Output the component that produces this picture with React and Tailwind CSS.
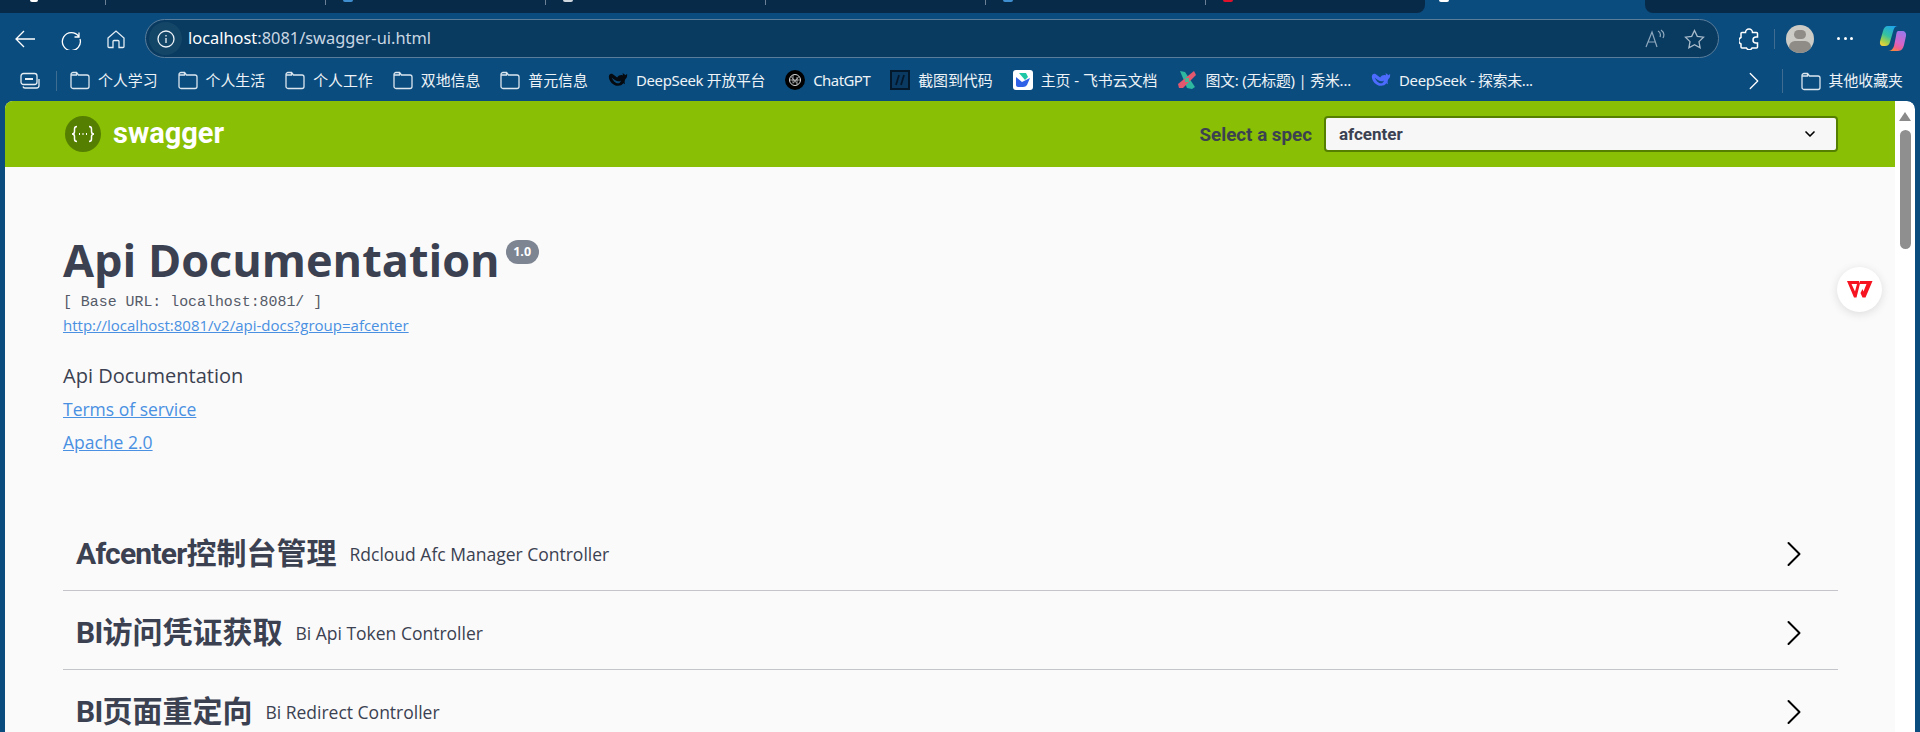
import React from "react";
import { ChevronRight, ChevronDown } from "lucide-react";

const ui = { fontFamily: '"Noto Sans", "Noto Sans CJK SC", sans-serif' };

const FolderIcon = () => (
  <svg width="20" height="20" viewBox="0 0 20 20" fill="none" stroke="#dbe6ef" strokeWidth="1.3" className="shrink-0">
    <path d="M1 4.500a2 2 0 0 1 2-2h3.500l2 2.500H17a2 2 0 0 1 2 2v9.500a2 2 0 0 1-2 2H3a2 2 0 0 1-2-2z" />
    <path d="M6.500 2.500v2.500H1" />
  </svg>
);

const WhaleIcon = ({ color }) => (
  <svg width="20" height="18" viewBox="0 0 24 20" fill={color} className="shrink-0">
    <path d="M23 3c-1 0-1.500.6-2.200 1.400C20 3 18.500 2 17.500 1.500l.5 3C16 3.500 13 4 11 7L5 2.500C3 2 1 3 1 6c0 5 5 11 11 11 3 0 5-1 6.500-3 .5.600 1.500 1 2 1-.5-1-.7-2-.5-3.500.3-2 1-3 2-4 .7-.8 1-2 1-4.500zM12 14c-3 0-6-3-7.500-7 2 2 4.500 4 7.500 4.500 1.500.2 2.500-.2 3.500-1-.5 2-1.500 3.500-3.500 3.500z" />
  </svg>
);

const ChatGptIcon = () => (
  <span className="w-5 h-5 rounded-full bg-black flex items-center justify-center shrink-0">
    <svg width="14" height="14" viewBox="0 0 14 14" fill="none" stroke="#d8d8d8" strokeWidth="1">
      <circle cx="7" cy="7" r="5.500" />
      <path d="M3 3.500l6 7M11 3.500l-6 7M1.500 7h11M5 2v8M9 4v8" strokeWidth=".7" />
    </svg>
  </span>
);

const SliceIcon = () => (
  <span className="w-5 h-5 bg-[#0a3a62] border-2 border-[#04182c] flex items-center justify-center shrink-0">
    <svg width="14" height="14" viewBox="0 0 14 14" fill="none" stroke="#04182c" strokeWidth="1.800">
      <path d="M6 2L3 12M11 2L8 12" />
    </svg>
  </span>
);

const FeishuIcon = () => (
  <span className="w-5 h-5 rounded-[3px] bg-white flex items-center justify-center shrink-0">
    <svg width="16" height="16" viewBox="0 0 16 16">
      <path d="M4 1h7l2 4-3 3z" fill="#1ec7a5" />
      <path d="M1 5l6 5 8-4-3 7c-1 1-2 2-4 2H3c-1 0-2-1-2-2z" fill="#2f62e6" />
    </svg>
  </span>
);

const XIcon = () => (
  <svg width="20" height="20" viewBox="0 0 20 20" className="shrink-0">
    <path d="M3 1l5 1 10 15-3 2-5-1z" fill="#2eb8a0" />
    <path d="M17 1l2 4L6 18l-4 0-1-4z" fill="#e2586e" />
    <path d="M8 8l4 0 0 4-4 0z" fill="#4db58f" />
  </svg>
);

const bookmarks = [
  { label: "个人学习", icon: <FolderIcon /> },
  { label: "个人生活", icon: <FolderIcon /> },
  { label: "个人工作", icon: <FolderIcon /> },
  { label: "双地信息", icon: <FolderIcon /> },
  { label: "普元信息", icon: <FolderIcon /> },
  { label: "DeepSeek 开放平台", icon: <WhaleIcon color="#050a10" />, track: "tracking-[-0.3px]" },
  { label: "ChatGPT", icon: <ChatGptIcon />, track: "tracking-[-0.5px]" },
  { label: "截图到代码", icon: <SliceIcon /> },
  { label: "主页 - 飞书云文档", icon: <FeishuIcon /> },
  { label: "图文: (无标题) | 秀米...", icon: <XIcon />, track: "tracking-[-0.2px]" },
  { label: "DeepSeek - 探索未...", icon: <WhaleIcon color="#4d6bfe" />, track: "tracking-[-0.3px]" },
];

const sections = [
  { latin: "Afcenter", cjk: "控制台管理", desc: "Rdcloud Afc Manager Controller" },
  { latin: "BI", cjk: "访问凭证获取", desc: "Bi Api Token Controller" },
  { latin: "BI", cjk: "页面重定向", desc: "Bi Redirect Controller" },
];

// favicons of the background tabs, only their bottom edge is still on screen
const tabs = [
  { color: "" },
  { color: "bg-[#3f8fd0]" },
  { color: "bg-[#cfd8df]" },
  { color: "" },
  { color: "bg-[#3f8fd0]" },
  { color: "bg-[#e0112b]" },
];

const TabStrip = () => (
  <div className="flex h-[13px] shrink-0">
    <div className="flex w-[1425px] bg-[#082a49] rounded-br-lg overflow-hidden">
      <div className="w-[105px] pl-[30px]">
        <span className="block w-2 h-[2px] bg-white rounded-b-full" />
      </div>
      {tabs.map((t, i) => (
        <div key={i} className="relative w-[220px] pl-[18px]">
          <span className="absolute left-0 top-0 w-px h-[5px] bg-[#6d8196]" />
          {t.color && <span className={`block w-[10px] h-[2px] rounded-b-full ${t.color}`} />}
        </div>
      ))}
    </div>
    <div className="w-[220px] pl-[14px]">
      <span className="block w-[10px] h-[2px] rounded-b-full bg-white" />
    </div>
    <div className="flex-1 bg-[#082a49] rounded-bl-lg" />
  </div>
);

const Toolbar = () => (
  <div className="flex items-center h-[47px] pb-[2px] pt-[6px]">
    <svg width="22" height="20" viewBox="0 0 22 20" fill="none" stroke="#fff" strokeWidth="1.300" className="ml-[14px]">
      <path d="M21 10H2M10 2l-8 8 8 8" />
    </svg>
    <svg width="22" height="22" viewBox="0 0 22 22" fill="none" stroke="#fff" strokeWidth="1.300" className="ml-[24px]">
      <path d="M19 4.500v4.500h-4.500M18.800 8.500A9 9 0 1 0 20 11" />
    </svg>
    <svg width="20" height="20" viewBox="0 0 20 20" fill="none" stroke="#e4edf4" strokeWidth="1.300" className="ml-[24px]">
      <path d="M2 9l8-7 8 7v8.500a1 1 0 0 1-1 1h-4v-6a1 1 0 0 0-1-1H8a1 1 0 0 0-1 1v6H3a1 1 0 0 1-1-1z" />
    </svg>
    <div className="ml-[19px] w-[1574px] h-[39px] rounded-full border border-[#5a7d9b] bg-[#093a60] flex items-center pl-[3px] pr-[13px]">
      <span className="w-[33px] h-[33px] rounded-full bg-[#144668] flex items-center justify-center">
        <svg width="18" height="18" viewBox="0 0 18 18" fill="none" stroke="#eef3f7" strokeWidth="1.300">
          <circle cx="9" cy="9" r="8" />
          <path d="M9 8v5M9 5v1.400" />
        </svg>
      </span>
      <span className="ml-[6px] text-[16.400px] text-[#c9d7e3]" style={ui}>
        <span className="text-white">localhost</span>:8081/swagger-ui.html
      </span>
      <svg width="20" height="20" viewBox="0 0 20 20" fill="none" stroke="#8ea8bd" strokeWidth="1.200" className="ml-auto">
        <path d="M1 18L7 3l5 15M3 13h7M13 2c2 1 3 3 2 6M16 1c3 2 3.500 5 2 8" />
      </svg>
      <svg width="21" height="20" viewBox="0 0 21 20" fill="none" stroke="#a9bccb" strokeWidth="1.300" className="ml-[19px]">
        <path d="M10.500 1.500l2.800 5.800 6.200.9-4.500 4.400 1.100 6.200-5.600-3-5.600 3 1.100-6.200L1.500 8.200l6.200-.9z" />
      </svg>
    </div>
    <svg width="20" height="22" viewBox="0 0 20 22" fill="none" stroke="#fff" strokeWidth="1.500" className="ml-[20px]">
      <path d="M6.500 4.500a3.500 3.500 0 0 1 7 0h4a1 1 0 0 1 1 1v3.500h-1.500a3 3 0 0 0 0 6h1.500v4a1 1 0 0 1-1 1h-4.500a3 3 0 0 1-5.500 0H3a1 1 0 0 1-1-1v-3a3.500 3.500 0 0 1 0-6.500V5.500a1 1 0 0 1 1-1z" />
    </svg>
    <span className="ml-[15px] w-px h-[20px] bg-[#3f6d92]" />
    <span className="ml-[11px] w-[28px] h-[28px] rounded-full bg-[#cdcbc6] overflow-hidden flex flex-col items-center pt-[5px]">
      <span className="w-[12px] h-[12px] rounded-full bg-[#8f8c87]" />
      <span className="mt-[2px] w-[22px] h-[16px] rounded-full bg-[#8f8c87]" />
    </span>
    <span className="ml-[23px] flex gap-[3.500px]">
      <span className="w-[3px] h-[3px] rounded-full bg-white" />
      <span className="w-[3px] h-[3px] rounded-full bg-white" />
      <span className="w-[3px] h-[3px] rounded-full bg-white" />
    </span>
    <svg width="28" height="27" viewBox="0 0 28 27" className="ml-[26px]">
      <defs>
        <linearGradient id="cpa" x1="0.7" y1="0" x2="0.2" y2="1">
          <stop offset="0" stopColor="#1fa5ea" />
          <stop offset=".5" stopColor="#35c2a0" />
          <stop offset=".8" stopColor="#a5d04a" />
          <stop offset="1" stopColor="#f0d03a" />
        </linearGradient>
        <linearGradient id="cpb" x1="0.7" y1="0" x2="0.3" y2="1">
          <stop offset="0" stopColor="#9a78ea" />
          <stop offset=".55" stopColor="#d664c8" />
          <stop offset=".8" stopColor="#f0608a" />
          <stop offset="1" stopColor="#f58a3a" />
        </linearGradient>
      </defs>
      <path d="M9 1h10c-2.500 0-3.700 1.500-4.500 4L11 17c-.8 2.500-2 4-5 4H4c-2.500 0-3.500-2-3-4.500L4 6c.8-3 2-5 5-5z" fill="url(#cpa)" />
      <path d="M19 6h4c3 0 4.500 2 4 5l-2 9c-.7 3-2.500 6-6 6H9c3 0 5-2 6-5l2-10c.3-2.500.8-5 2-5z" fill="url(#cpb)" />
    </svg>
  </div>
);

const BookmarkBar = () => (
  <div className="flex items-center h-[41px] pr-[17px] text-[14.900px] text-[#eef3f7]" style={ui}>
    <svg width="20" height="18" viewBox="0 0 20 18" fill="none" stroke="#e6eef4" strokeWidth="1.300" className="ml-[20px]">
      <rect x="1" y="1.500" width="16" height="11" rx="2.500" />
      <path d="M5 7h8" strokeWidth="2" />
      <path d="M19 7v6.500a2.500 2.500 0 0 1-2.500 2.500H5a2 2 0 0 1-2-1.500" />
    </svg>
    <span className="ml-[16px] mr-[13px] w-px h-5 bg-[#3f6d92]" />
    <div className="flex items-center gap-5 whitespace-nowrap">
      {bookmarks.map((b, i) => (
        <div key={i} className="flex items-center gap-2">
          {b.icon}
          <span className={b.track}>{b.label}</span>
        </div>
      ))}
    </div>
    <ChevronRight size={30} strokeWidth={1} className="ml-auto text-white" />
    <span className="ml-[13px] mr-[18px] w-px h-6 bg-[#3f6d92]" />
    <FolderIcon />
    <span className="ml-2 whitespace-nowrap">其他收藏夹</span>
  </div>
);

const SwaggerBar = () => (
  <div className="flex items-center h-[66px] bg-[#89bf04] pl-[60px] pr-[57px]">
    <span className="w-9 h-9 rounded-full bg-[#547f00] flex items-center justify-center">
      <svg width="24" height="18" viewBox="0 0 24 18" fill="none" stroke="#fff" strokeWidth="1.500">
        <path d="M6 1.500c-2 0-2.500 1-2.500 2.500v2.500c0 1.500-1 2.500-2.500 2.500 1.500 0 2.500 1 2.500 2.500V14c0 1.500.5 2.500 2.500 2.500M18 1.500c2 0 2.500 1 2.500 2.500v2.500c0 1.500 1 2.500 2.500 2.500-1.500 0-2.500 1-2.500 2.500V14c0 1.500-.5 2.500-2.500 2.500" />
        <path d="M8 9h1M11.500 9h1M15 9h1" strokeWidth="1.800" />
      </svg>
    </span>
    <span className="ml-3 text-[29px] font-bold text-white" style={{ fontFamily: "Roboto, sans-serif" }}>
      swagger
    </span>
    <div className="ml-auto flex items-center gap-3">
      <span className="pt-[2px] text-[18.800px] font-bold text-[#3b4151]" style={{ fontFamily: "Roboto, sans-serif" }}>
        Select a spec
      </span>
      <div className="w-[514px] h-9 rounded-[4px] border-2 border-[#547f00] bg-[#f7f7f7] flex items-center justify-between pl-[13px] pr-[18px] text-[17px] font-bold text-[#3b4151]" style={{ fontFamily: "Roboto, sans-serif" }}>
        <span className="pt-px">afcenter</span>
        <ChevronDown size={16} strokeWidth={2.500} className="text-black" />
      </div>
    </div>
  </div>
);

const Scrollbar = () => (
  <div className="w-[20px] shrink-0 bg-white flex flex-col items-center pt-[11px] rounded-tr-lg">
    <span className="w-0 h-0 border-x-[6px] border-x-transparent border-b-[9px] border-b-[#8a8a8a]" />
    <span className="mt-[9px] w-[11px] h-[119px] rounded-full bg-[#8f8f8f]" />
  </div>
);

export default function App() {
  return (
    <div className="relative w-[1920px] h-[732px] overflow-hidden bg-[#0b4c7e] flex flex-col">
      <TabStrip />
      <Toolbar />
      <BookmarkBar />

      <div className="flex flex-1 min-h-0 ml-[5px] mr-[5px] rounded-t-lg overflow-hidden">
        <div className="flex-1 min-w-0 bg-[#fafafa] text-[#3b4151]">
          <SwaggerBar />

          <div className="pl-[58px] pr-[57px] pt-[63px]" style={{ fontFamily: '"Open Sans", "Noto Sans CJK SC", sans-serif' }}>
            <div className="flex items-start h-[60px]">
              <h1 className="text-[45px] font-bold leading-[60px]">Api Documentation</h1>
              <span className="ml-[6px] mt-[10px] w-[33px] h-[24px] rounded-full bg-[#7d8492] text-white text-[12.500px] font-bold flex items-center justify-center">
                1.0
              </span>
            </div>
            <p className="mt-[2px] text-[14.900px] leading-[20px] text-[#555a68]" style={{ fontFamily: '"Liberation Mono", monospace' }}>
              [ Base URL: localhost:8081/ ]
            </p>
            <a className="block mt-[3px] text-[15px] leading-[20px] text-[#4990e2] underline">
              http://localhost:8081/v2/api-docs?group=afcenter
            </a>

            <p className="mt-[29px] text-[20px] leading-[24px]">Api Documentation</p>
            <a className="block mt-[9px] text-[17.500px] leading-[24px] text-[#4990e2] underline">Terms of service</a>
            <a className="block mt-[9px] text-[17.500px] leading-[24px] text-[#4990e2] underline">Apache 2.0</a>

            <div className="mt-[58px]">
              {sections.map((s, i) => (
                <div key={i} className="flex items-center h-[79px] pl-[13px] pr-[22px] pt-[6px] border-b border-[#c4c5ca]">
                  <h2 className="text-[30px] font-bold leading-none" style={{ fontFamily: 'Roboto, "Noto Sans CJK SC", sans-serif' }}>
                    <span className="tracking-[-0.75px]">{s.latin}</span>
                    {s.cjk}
                  </h2>
                  <span className="ml-[13px] text-[17.500px]">{s.desc}</span>
                  <ChevronRight size={44} strokeWidth={1.100} className="ml-auto text-black" />
                </div>
              ))}
            </div>
          </div>
        </div>
        <Scrollbar />
      </div>

      <div className="absolute left-[1837px] top-[267px] w-[45px] h-[45px] rounded-full bg-white shadow-[0_2px_10px_rgba(0,0,0,0.12)] flex items-center justify-center">
        <svg width="26" height="17" viewBox="0 0 26 17" fill="#f5141f" fillRule="evenodd">
          <path d="M0 0h12l1 2.500L9.500 16.500H7zM4.500 3l3.500 7.500 2-7.500z" />
          <path d="M13 0h12.500l-7 16.500h-3L13.500 12l2-4 1 2.500L19.500 3H13z" />
        </svg>
      </div>
    </div>
  );
}
